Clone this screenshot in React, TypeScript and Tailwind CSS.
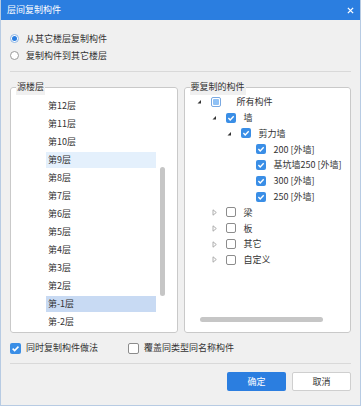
import React from "react";

type TreeRow = {
  label: string;
  level: number;
  arrow: "open" | "closed" | "none";
  state: "checked" | "partial" | "empty";
  gap?: string;
};

const indent = ["pl-[10px]", "pl-[25px]", "pl-[40px]", "pl-[55px]"];

const floors = [
  "第12层",
  "第11层",
  "第10层",
  "第9层",
  "第8层",
  "第7层",
  "第6层",
  "第5层",
  "第4层",
  "第3层",
  "第2层",
  "第-1层",
  "第-2层",
];

const tree: TreeRow[] = [
  { label: "所有构件", level: 0, arrow: "open", state: "partial", gap: "ml-[16px]" },
  { label: "墙", level: 1, arrow: "open", state: "checked" },
  { label: "剪力墙", level: 2, arrow: "open", state: "checked" },
  { label: "200 [外墙]", level: 3, arrow: "none", state: "checked" },
  { label: "基坑墙250 [外墙]", level: 3, arrow: "none", state: "checked" },
  { label: "300 [外墙]", level: 3, arrow: "none", state: "checked" },
  { label: "250 [外墙]", level: 3, arrow: "none", state: "checked" },
  { label: "梁", level: 1, arrow: "closed", state: "empty" },
  { label: "板", level: 1, arrow: "closed", state: "empty" },
  { label: "其它", level: 1, arrow: "closed", state: "empty" },
  { label: "自定义", level: 1, arrow: "closed", state: "empty" },
];

function Check({ size = "w-[10px] h-[10px]" }: { size?: string }) {
  return (
    <div className={`${size} shrink-0 rounded-[2px] bg-[#3a8ee6] flex items-center justify-center`}>
      <svg viewBox="0 0 10 10" className="w-full h-full">
        <path d="M2.4 5.1 L4.2 6.9 L7.7 3.3" fill="none" stroke="#fff" strokeWidth="1.4" />
      </svg>
    </div>
  );
}

function Empty({ size = "w-[10px] h-[10px]" }: { size?: string }) {
  return <div className={`${size} shrink-0 rounded-[2px] border border-[#8c8c8c] bg-white`} />;
}

function Partial() {
  return (
    <div className="w-[10px] h-[10px] shrink-0 rounded-[2px] border border-[#7aa9e2] bg-white flex items-center justify-center">
      <div className="w-[6px] h-[6px] rounded-[1px] bg-[#8fc1f5]" />
    </div>
  );
}

function Arrow({ kind }: { kind: TreeRow["arrow"] }) {
  if (kind === "none") return <div className="w-[9px] shrink-0" />;
  if (kind === "open")
    return (
      <svg viewBox="0 0 9 9" className="w-[9px] h-[9px] shrink-0">
        <path d="M6 3 L6 6.5 L2.5 6.5 Z" fill="#333" />
      </svg>
    );
  return (
    <svg viewBox="0 0 9 9" className="w-[9px] h-[9px] shrink-0">
      <path d="M3 1.8 L6.3 4.5 L3 7.2 Z" fill="none" stroke="#a5a5a5" strokeWidth="0.9" />
    </svg>
  );
}

export default function App() {
  return (
    <div className="w-[361px] h-[406px] bg-[#f0f0f0] border-x border-b border-[#b7cbe3] flex flex-col font-['Noto_Sans_CJK_SC',sans-serif] text-[9px] text-[#333] overflow-hidden">
      {/* title bar */}
      <div className="h-[20px] shrink-0 bg-[#2b7ee0] -mx-px flex items-center justify-between pl-[7px] pr-[7px] text-white">
        <span className="text-[9px]">层间复制构件</span>
        <svg viewBox="0 0 8 8" className="w-[7px] h-[7px]">
          <path d="M1 1 L7 7 M7 1 L1 7" stroke="#fff" strokeWidth="1.5" />
        </svg>
      </div>

      <div className="flex flex-col px-[9px]">
        {/* radios */}
        <div className="pt-[10px] flex flex-col">
          <div className="h-[17px] flex items-center">
            <div className="w-[9px] h-[9px] rounded-full border border-[#8fb7e6] bg-white flex items-center justify-center">
              <div className="w-[5px] h-[5px] rounded-full bg-[#2b7ee0]" />
            </div>
            <span className="ml-[7px]">从其它楼层复制构件</span>
          </div>
          <div className="h-[17px] flex items-center">
            <div className="w-[9px] h-[9px] rounded-full border border-[#9a9a9a] bg-white" />
            <span className="ml-[7px]">复制构件到其它楼层</span>
          </div>
        </div>

        <div className="mt-[7px] border-t border-[#d9d9d9]" />

        {/* group boxes */}
        <div className="mt-[7px] flex gap-[6px]">
          <fieldset className="w-[168px] border border-[#c9c9c9] rounded-[3px] bg-white">
            <legend className="ml-[5px] px-px leading-[16px] bg-[#f0f0f0]">源楼层</legend>
            <div className="h-[237px] flex pt-[2px]">
              <div className="ml-[35px] w-[110px] flex flex-col">
                {floors.map((f) => (
                  <div key={f} className="h-[18px] flex items-center">
                    <div
                      className={
                        f === "第9层"
                          ? "h-[16px] w-full pl-[2px] flex items-center bg-[#e4f0fc]"
                          : f === "第-1层"
                          ? "h-[16px] w-full pl-[2px] flex items-center bg-[#c8daf3]"
                          : "h-[16px] w-full pl-[2px] flex items-center"
                      }
                    >
                      {f}
                    </div>
                  </div>
                ))}
              </div>
              <div className="ml-[4px] w-[5px]">
                <div className="mt-[70px] h-[129px] rounded-full bg-[#c6c6c6]" />
              </div>
            </div>
          </fieldset>

          <fieldset className="w-[168px] border border-[#c9c9c9] rounded-[3px] bg-white">
            <legend className="ml-[5px] px-px leading-[16px] bg-[#f0f0f0]">要复制的构件</legend>
            <div className="h-[237px] flex flex-col">
              <div className="-mt-[1px] flex flex-col">
                {tree.map((r) => (
                  <div key={r.label} className={`h-[15.8px] flex items-center ${indent[r.level]}`}>
                    <Arrow kind={r.arrow} />
                    <div className="ml-[7px]">
                      {r.state === "checked" ? <Check /> : r.state === "partial" ? <Partial /> : <Empty />}
                    </div>
                    <span className={r.gap ?? "ml-[8px]"}>{r.label}</span>
                  </div>
                ))}
              </div>
              <div className="mt-auto mb-[10px] ml-[15px] w-[123px] h-[5px] rounded-full bg-[#c6c6c6]" />
            </div>
          </fieldset>
        </div>

        {/* options */}
        <div className="mt-[7px] h-[16px] flex items-center">
          <Check size="w-[11px] h-[11px]" />
          <span className="ml-[5px]">同时复制构件做法</span>
          <div className="ml-[30px]">
            <Empty size="w-[11px] h-[11px]" />
          </div>
          <span className="ml-[5px]">覆盖同类型同名称构件</span>
        </div>

        <div className="mt-[7px] border-t border-[#d9d9d9]" />

        {/* buttons */}
        <div className="mt-[8px] flex justify-end gap-[6px] pr-0">
          <button className="w-[59px] h-[19px] rounded-[2px] bg-[#2b7ee0] text-white text-[9px]">确定</button>
          <button className="w-[59px] h-[19px] rounded-[2px] border border-[#cfcfcf] bg-white text-[#333] text-[9px]">取消</button>
        </div>
      </div>
    </div>
  );
}
